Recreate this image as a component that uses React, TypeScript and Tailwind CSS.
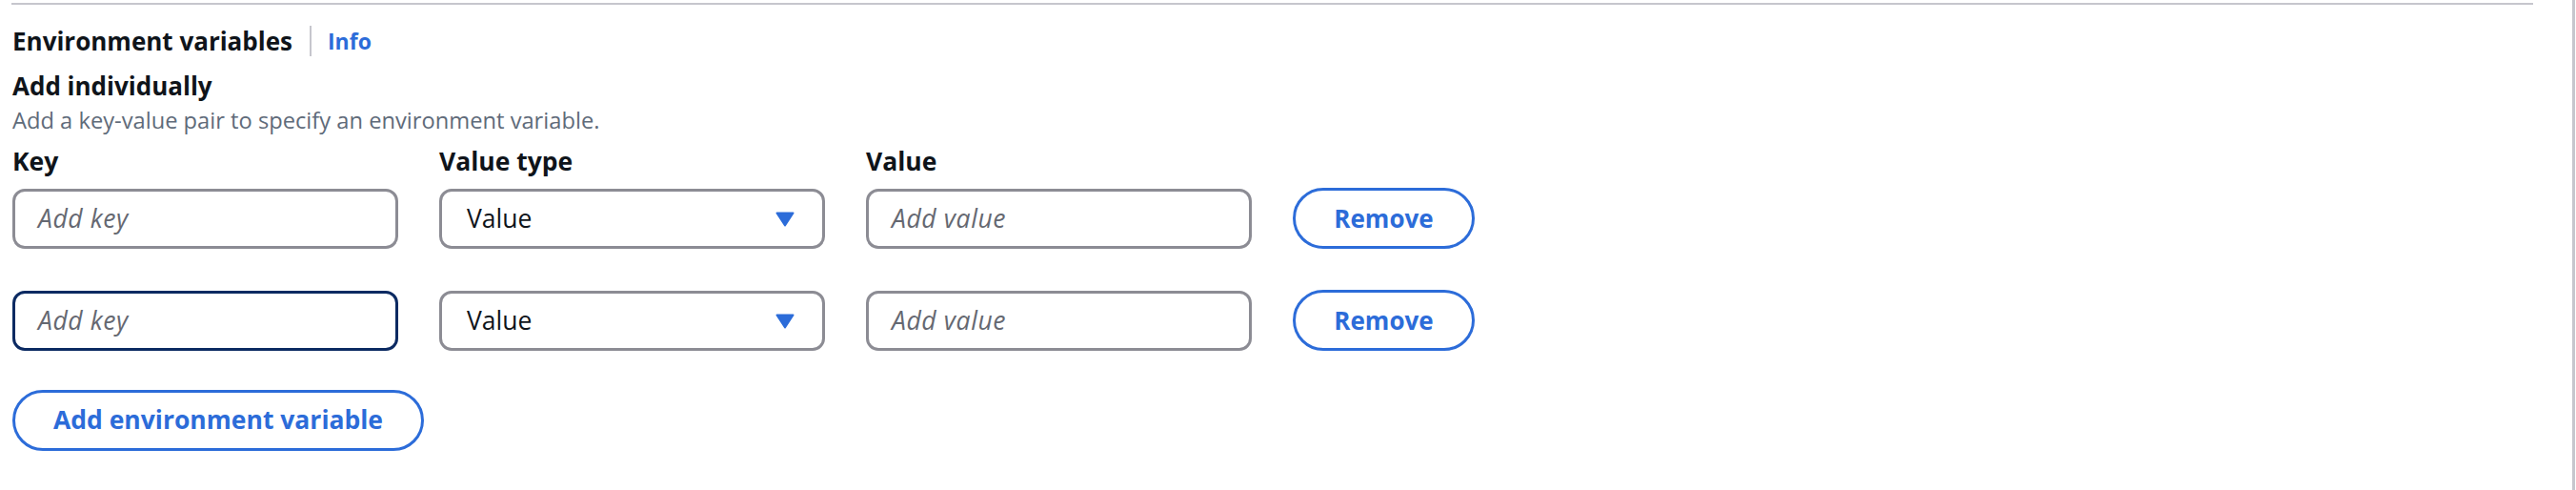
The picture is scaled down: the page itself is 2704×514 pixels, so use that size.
import { useState } from "react"

// Fila de variable de entorno: clave, tipo de valor, valor, botón quitar
type Row = { id: number; focused?: boolean }

const rows: Row[] = [{ id: 1 }, { id: 2, focused: true }]

function Caret() {
  return (
    <svg width="20" height="16" viewBox="0 0 20 16" className="shrink-0">
      <path d="M1.5 1.5 H18.5 L10 14.5 Z" fill="#2c6cd9" stroke="#2c6cd9" strokeWidth="2" strokeLinejoin="round" />
    </svg>
  )
}

export default function App() {
  const [values] = useState(rows)

  return (
    <div
      className="w-[2704px] h-[514px] bg-white flex overflow-hidden text-[#0f141a]"
      style={{ fontFamily: "'Open Sans', Lato, sans-serif" }}
    >
      <div className="flex-1 pl-[13px] pr-[41px] flex flex-col">
        {/* Divisor superior */}
        <div className="mt-[3px] -ml-[1px] h-[2px] bg-[#c6c6cd]" />

        {/* Header */}
        <div className="mt-[21px] flex items-center h-[34px]">
          <h2 className="text-[26px] font-bold leading-[34px]">Environment variables</h2>
          <div className="ml-[18px] w-[2px] h-[32px] bg-[#c6c6cd]" />
          <a className="ml-[17px] text-[23px] font-bold text-[#2c6cd9] leading-[34px]">Info</a>
        </div>

        <h3 className="mt-[13px] text-[26px] font-bold leading-[34px]">Add individually</h3>
        <p className="mt-[2px] text-[23.7px] leading-[34px] text-[#5f6b7a]">
          Add a key-value pair to specify an environment variable.
        </p>

        {/* Grid de campos */}
        <div className="mt-[9px] grid grid-cols-[405px_405px_405px_191px] gap-x-[43px]">
          <span className="text-[26.5px] font-bold leading-[34px]">Key</span>
          <span className="text-[26.5px] font-bold leading-[34px]">Value type</span>
          <span className="text-[26.5px] font-bold leading-[34px]">Value</span>
          <span />
        </div>

        <div className="mt-[12px] flex flex-col gap-[44px]">
          {values.map((r) => (
            <div key={r.id} className="grid grid-cols-[405px_405px_405px_191px] gap-x-[43px]">
              <div
                className={`h-[63px] rounded-[13px] border-[3px] flex items-center pl-[24px] ${
                  r.focused ? "border-[#0b2a62]" : "border-[#8c8c94]"
                }`}
              >
                <span className="text-[26.5px] italic tracking-[0.6px] text-[#656871]">Add key</span>
              </div>
              <div className="h-[63px] rounded-[13px] border-[3px] border-[#8c8c94] flex items-center justify-between pl-[26px] pr-[29px]">
                <span className="text-[26.5px]">Value</span>
                <Caret />
              </div>
              <div className="h-[63px] rounded-[13px] border-[3px] border-[#8c8c94] flex items-center pl-[24px]">
                <span className="text-[26.5px] italic tracking-[0.6px] text-[#656871]">Add value</span>
              </div>
              <button className="h-[64px] -mt-[1px] rounded-full border-[3px] border-[#2c6cd9] text-[26px] font-bold text-[#2c6cd9]">
                Remove
              </button>
            </div>
          ))}
        </div>

        <div className="mt-[41px]">
          <button className="w-[432px] h-[64px] rounded-full border-[3px] border-[#2c6cd9] text-[26.5px] font-bold text-[#2c6cd9]">
            Add environment variable
          </button>
        </div>
      </div>

      {/* Borde derecho */}
      <div className="w-[3px] mr-[1px] bg-[#c6c6cd]" />
    </div>
  )
}
